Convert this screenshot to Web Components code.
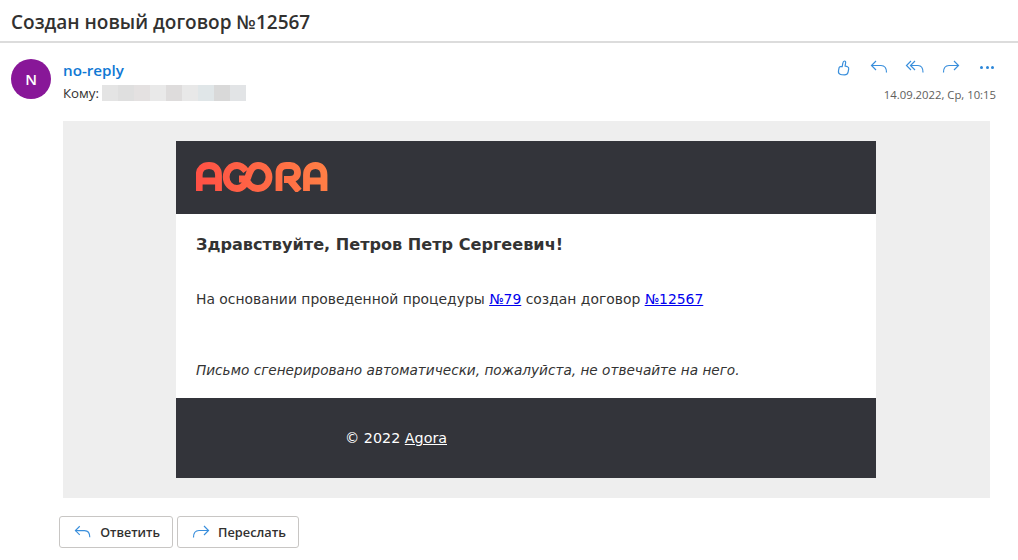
<!DOCTYPE html>
<html lang="ru">
<head>
<meta charset="utf-8">
<title>Письмо</title>
<style>
  html, body { margin: 0; padding: 0; background: #fff; }
  body { font-family: "Open Sans", "Noto Sans", sans-serif; overflow: hidden; height: 560px; }
</style>
</head>
<body>
<mail-view>
  <mail-subject>Создан новый договор №12567</mail-subject>
  <mail-head></mail-head>
  <mail-body>
    <agora-letter>
      <h-line slot="greeting">Здравствуйте, Петров Петр Сергеевич!</h-line>
    </agora-letter>
  </mail-body>
  <mail-footer></mail-footer>
</mail-view>

<script>
/**
 * Shared icon markup.
 */
const icons = {
  like: '<path d="M4.500 16.500c-1.600-.6-2.300-2-2-3.600l.6-3.200c.2-.8.8-1.200 1.600-1.100l1.500.1.6-3.400c.2-1.200.8-2.300 1.700-2.300s1.300.9 1.100 2l-.5 3.100 2.300.6c1 .3 1.500 1.100 1.300 2.100l-.6 3.300c-.4 1.800-1.800 2.800-3.600 2.800-1.500 0-2.900 0-4-.4z"/>',
  reply: '<path d="M1.500 5.500h9.500c3.500 0 5.500 2.500 5.500 7"/><path d="M6 1L1.500 5.500 6 10"/>',
  replyAll: '<path d="M6 5.500h7c3 0 5 2.500 5 7"/><path d="M10 1L5.500 5.500 10 10"/><path d="M6 1L1.500 5.500 6 10"/>',
  forward: '<path d="M16.500 5.500H7c-3.500 0-5.500 2.500-5.500 7"/><path d="M12 1l4.500 4.500L12 10"/>'
}

/**
 * Page frame.
 */
customElements.define('mail-view',
  class extends HTMLElement {
    constructor () {
      super()
      this.attachShadow({ mode: 'open' }).innerHTML = `
        <style>
          :host { display: flex; flex-direction: column; width: 1018px; height: 560px; }
        </style>
        <slot></slot>
      `
    }
  }
)

/**
 * Subject line with the rule below it.
 */
customElements.define('mail-subject',
  class extends HTMLElement {
    constructor () {
      super()
      this.attachShadow({ mode: 'open' }).innerHTML = `
        <style>
          :host {
            display: block;
            height: 41px;
            padding-left: 11px;
            border-bottom: 2px solid #dcdcdc;
            font: 600 19px/44px "Open Sans", sans-serif;
            color: #323130;
            white-space: nowrap;
          }
        </style>
        <slot></slot>
      `
    }
  }
)

/**
 * Sender, recipient and the action icons.
 */
customElements.define('mail-head',
  class extends HTMLElement {
    constructor () {
      super()
      this.attachShadow({ mode: 'open' }).innerHTML = `
        <style>
          :host {
            display: flex;
            height: 78px;
            box-sizing: border-box;
            padding: 16px 0 0 11px;
            color: #323130;
            font-family: "Open Sans", sans-serif;
          }
          .avatar {
            width: 40px; height: 40px; border-radius: 50%;
            background: #881798; color: #fff;
            display: flex; align-items: center; justify-content: center;
            font-size: 15px; font-weight: 600;
            flex: none;
          }
          .who { margin: -1px 0 0 12px; flex: 1; }
          .name { color: #0f78d4; font-size: 15.200px; font-weight: 600; line-height: 24px; }
          .to { display: flex; align-items: center; font-size: 13.300px; line-height: 18px; margin-top: 2px; }
          .blur { display: flex; margin-left: 3px; }
          .blur i { width: 16px; height: 16px; display: block; }
          .side { display: flex; flex-direction: column; align-items: flex-end; padding-right: 24px; margin-top: -1px; }
          .actions { display: flex; gap: 18px; align-items: center; height: 18px; }
          .actions svg { display: block; fill: none; stroke: #3a8fdc; stroke-width: 1.200; }
          .more { display: flex; gap: 2.500px; margin-left: 2px; }
          .more b { width: 3px; height: 3px; background: #2b86d8; border-radius: 50%; display: block; }
          .date { font-size: 11.300px; color: #605e5c; line-height: 16px; margin: 11px -2px 0 0; }
        </style>
        <div class="avatar">N</div>
        <div class="who">
          <div class="name">no-reply</div>
          <div class="to">Кому:<span class="blur">
            <i style="background:#e4e4e4"></i><i style="background:#dfdfdf"></i><i style="background:#e4e1e1"></i><i style="background:#e9e9e9"></i><i style="background:#dedcdc"></i><i style="background:#e8e8e8"></i><i style="background:#e0e6e8"></i><i style="background:#d9d9d9"></i><i style="background:#e2e4e6"></i>
          </span></div>
        </div>
        <div class="side">
          <div class="actions">
            <svg width="16" height="18" viewBox="0 0 16 18">${icons.like}</svg>
            <svg width="18" height="14" viewBox="0 0 18 14">${icons.reply}</svg>
            <svg width="19" height="14" viewBox="0 0 19 14" style="margin-left:-1px">${icons.replyAll}</svg>
            <svg width="18" height="14" viewBox="0 0 18 14">${icons.forward}</svg>
            <span class="more"><b></b><b></b><b></b></span>
          </div>
          <div class="date">14.09.2022, Ср, 10:15</div>
        </div>
      `
    }
  }
)

/**
 * Grey area that holds the letter.
 */
customElements.define('mail-body',
  class extends HTMLElement {
    constructor () {
      super()
      this.attachShadow({ mode: 'open' }).innerHTML = `
        <style>
          :host {
            display: flex;
            box-sizing: border-box;
            width: 927px;
            height: 377px;
            margin-left: 63px;
            padding: 20px 0 0 113px;
            background: #eeeeee;
          }
        </style>
        <slot></slot>
      `
    }
  }
)

/**
 * Heading inside the letter.
 */
customElements.define('h-line',
  class extends HTMLElement {
    constructor () {
      super()
      this.attachShadow({ mode: 'open' }).innerHTML = `
        <style>
          :host { display: block; font: bold 16.100px/22px "DejaVu Sans", Verdana, sans-serif; color: #333; }
        </style>
        <slot></slot>
      `
    }
  }
)

/**
 * The letter itself: logo band, text and dark footer.
 */
customElements.define('agora-letter',
  class extends HTMLElement {
    constructor () {
      super()
      this.attachShadow({ mode: 'open' }).innerHTML = `
        <style>
          :host {
            display: flex;
            flex-direction: column;
            width: 700px;
            height: 337px;
            background: #fff;
            color: #333;
            font: 13.900px/20px "DejaVu Sans", Verdana, sans-serif;
          }
          .top { height: 73px; background: #33343a; display: flex; align-items: center; padding: 0 20px; flex: none; }
          .top svg { display: block; margin-top: -2px; }
          .text { flex: 1; padding: 20px 20px 0; }
          p { margin: 0; }
          .line { margin-top: 33px; }
          .note { margin-top: 51px; font-style: italic; font-size: 13.650px; }
          a { color: #0000ee; }
          .bottom { height: 80px; background: #33343a; color: #fff; flex: none; padding-left: 169px; line-height: 81px; font-size: 14.300px; }
          .bottom a { color: #fff; }
        </style>
        <div class="top">
          <svg width="132" height="30" viewBox="0 0 132 30" fill="none" stroke="url(#g)" stroke-width="6.800" role="img" aria-label="Agora">
            <defs>
              <linearGradient id="g" gradientUnits="userSpaceOnUse" x1="0" y1="30" x2="132" y2="0">
                <stop offset="0" stop-color="#ff4f45"/>
                <stop offset="1" stop-color="#ff8045"/>
              </linearGradient>
            </defs>
            <path d="M3.200 29V13C3.200 7 7 3.500 13 3.500s9.500 3.500 9.500 9.500V29M3.200 19h19.300"/>
            <path d="M50 9C47 5 44 3.500 41 3.500C34.500 3.500 30.200 9 30.200 15S34.500 26.500 41 26.500C48 26.500 50 20 52 15C54 9 56 3.500 62 3.500C68.500 3.500 73 9 73 15S68.500 26.500 62 26.500C56 26.500 52 22 50 17H43"/>
            <path d="M83 29V11c0-5 2.500-7.500 7.500-7.500H94c4.500 0 7.500 2.800 7.500 7s-3 7-7.500 7H88M94 18l9 11"/>
            <path d="M110.500 29V13c0-6 3.800-9.500 9-9.500s8.500 3.500 8.500 9.500V29M110.500 19h17.500"/>
          </svg>
        </div>
        <div class="text">
          <slot name="greeting"></slot>
          <p class="line">На основании проведенной процедуры <a href="#">№79</a> создан договор <a href="#">№12567</a></p>
          <p class="note">Письмо сгенерировано автоматически, пожалуйста, не отвечайте на него.</p>
        </div>
        <div class="bottom">© 2022 <a href="#">Agora</a></div>
      `
    }
  }
)

/**
 * Reply and forward buttons.
 */
customElements.define('mail-footer',
  class extends HTMLElement {
    constructor () {
      super()
      this.attachShadow({ mode: 'open' }).innerHTML = `
        <style>
          :host { display: flex; gap: 4px; padding: 18px 0 0 59px; }
          button {
            display: flex; align-items: center; gap: 9px;
            height: 32px; box-sizing: border-box; padding: 0 12px 0 14px;
            background: #fff; border: 1px solid #c8c6c4; border-radius: 3px;
            font: 600 12.500px "Open Sans", sans-serif; color: #323130;
          }
          svg { display: block; fill: none; stroke: #3a8fdc; stroke-width: 1.200; }
        </style>
        <button style="width:114px"><svg width="18" height="14" viewBox="0 0 18 14">${icons.reply}</svg>Ответить</button>
        <button style="width:122px; gap:8px; font-size:12.800px"><svg width="18" height="14" viewBox="0 0 18 14">${icons.forward}</svg>Переслать</button>
      `
    }
  }
)
</script>
</body>
</html>
